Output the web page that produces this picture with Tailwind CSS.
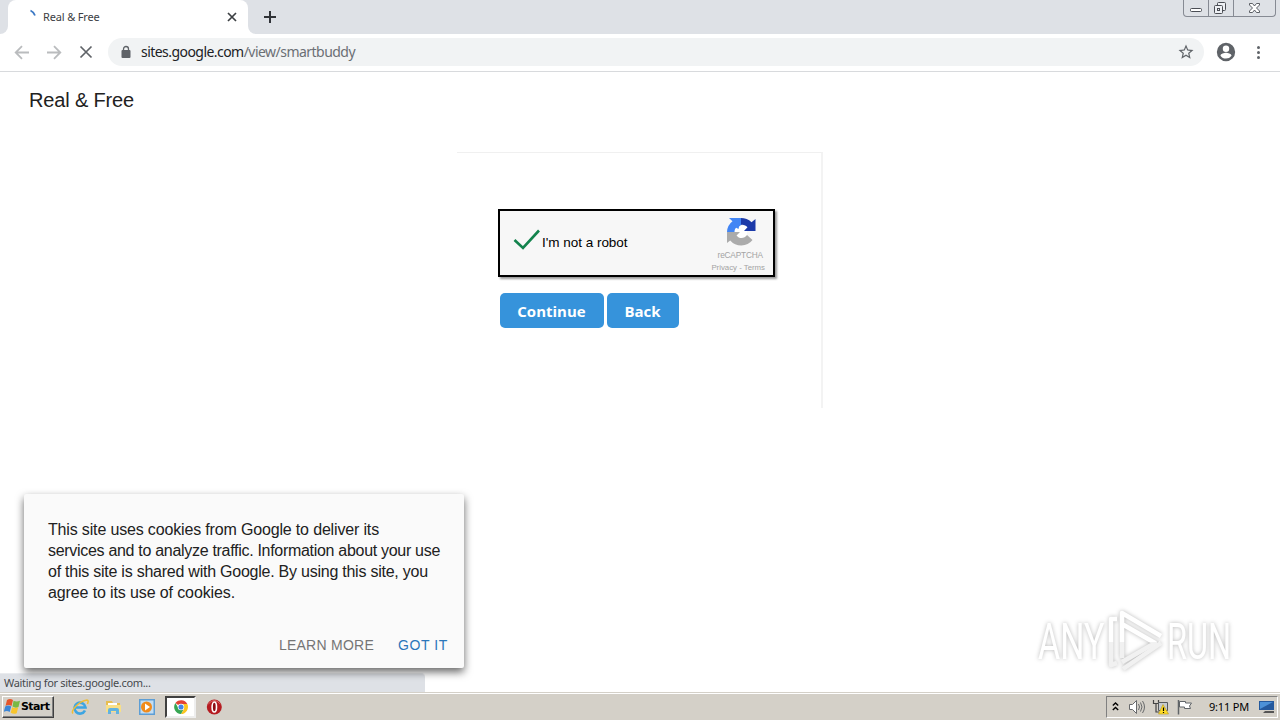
<!DOCTYPE html>
<html lang="en">
<head>
    <meta charset="UTF-8">
    <meta name="viewport" content="width=device-width, initial-scale=1.0">
    <title>Real &amp; Free</title>
    <script src="https://cdn.jsdelivr.net/npm/@tailwindcss/browser@4"></script>
</head>
<body class="flex flex-col w-[1280px] h-[720px] overflow-hidden bg-white font-['Liberation_Sans',sans-serif]">

    <!-- tab strip -->
    <div class="flex justify-between h-[34px] shrink-0 bg-[#dee1e6]">
        <div class="flex">
            <div class="w-2 bg-white"><div class="h-full bg-[#dee1e6] rounded-br-lg"></div></div>
            <div class="flex items-center w-60 pl-[21px] pr-[10px] bg-white rounded-t-lg">
                <svg class="mr-[5px] shrink-0" width="9" height="16" viewBox="0 0 9 16" fill="none" stroke="#3b78c4" stroke-width="1.8"><path d="M1.500 1.500Q4.500 2.800 6 6.500"/></svg>
                <span class="text-[11px] tracking-[-0.15px] text-[#3c4043] font-['Noto_Sans',sans-serif] whitespace-nowrap">Real &amp; Free</span>
                <svg class="ml-auto" width="12" height="12" viewBox="0 0 12 12" stroke="#3c4043" stroke-width="1.7"><path d="M2 2l8 8M10 2l-8 8"/></svg>
            </div>
            <div class="w-2 bg-white"><div class="h-full bg-[#dee1e6] rounded-bl-lg"></div></div>
            <svg class="ml-[7px] mt-[10px]" width="14" height="14" viewBox="0 0 14 14" stroke="#303338" stroke-width="2"><path d="M7 1v12M1 7h12"/></svg>
        </div>
        <!-- window buttons -->
        <div class="flex h-[17px] mr-[4px] border border-t-0 border-[#868a93] rounded-b-[4px] text-[#4b4e55]">
            <svg width="24" height="16" viewBox="0 0 24 16" fill="#fff" stroke="currentColor"><rect x="6.5" y="8.5" width="11" height="3" rx="1"/></svg>
            <div class="border-x border-[#868a93]">
                <svg width="24" height="16" viewBox="0 0 24 16" fill="#eef0f4" stroke="currentColor"><rect x="8.500" y="2.500" width="8" height="8" rx="1"/><rect x="5.500" y="5.500" width="8" height="8" rx="1"/><rect x="8.500" y="8.500" width="2" height="2"/></svg>
            </div>
            <svg width="41" height="16" viewBox="0 0 41 16" fill="#fff" stroke="currentColor" stroke-width=".9"><path d="M15.500 3.500h3l2 2.500 2-2.500h3v1.500l-3 3 3 3v1.500h-3l-2-2.500-2 2.500h-3v-1.500l3-3-3-3z"/></svg>
        </div>
    </div>

    <!-- address bar -->
    <div class="flex items-center h-[38px] shrink-0 pl-[14px] pr-[14px] border-b border-[#d8dadd] bg-white">
        <svg width="16" height="16" viewBox="0 0 16 16" fill="none" stroke="#babcbe" stroke-width="1.8"><path d="M15 7.500H2M8 1.200 1.700 7.500 8 13.800"/></svg>
        <svg class="ml-4" width="16" height="16" viewBox="0 0 16 16" fill="none" stroke="#babcbe" stroke-width="1.8"><path d="M1 7.500h13M8 1.200 14.300 7.500 8 13.800"/></svg>
        <svg class="ml-4" width="16" height="16" viewBox="0 0 16 16" stroke="#5f6368" stroke-width="1.7"><path d="M2.500 1.500l11 11M13.500 1.500l-11 11"/></svg>
        <div class="flex items-center ml-[14px] w-[1096px] h-7 mt-[-2px] pl-[13px] pr-[9px] rounded-full bg-[#f1f3f4]">
            <svg width="10" height="14" viewBox="0 0 10 14"><rect x=".5" y="5" width="9" height="8" rx="1" fill="#5f6368"/><path d="M2.500 5.500V4a2.500 2.500 0 0 1 5 0v1.500" fill="none" stroke="#5f6368" stroke-width="1.300"/></svg>
            <span class="ml-[10px] text-[14px] leading-5 tracking-[-0.55px] font-['Noto_Sans',sans-serif] text-[#202124] whitespace-nowrap">sites.google.com<span class="tracking-[-0.53px] text-[#6b6f74]">/view/smartbuddy</span></span>
            <svg class="ml-auto" width="18" height="18" viewBox="0 0 24 24" fill="#5f6368"><path d="M22 9.240l-7.190-.62L12 2 9.190 8.630 2 9.240l5.460 4.730L5.820 21 12 17.270 18.180 21l-1.630-7.030L22 9.240zM12 15.400l-3.760 2.270 1-4.280-3.320-2.880 4.380-.38L12 6.100l1.710 4.040 4.380.38-3.320 2.880 1 4.280L12 15.400z"/></svg>
        </div>
        <svg class="ml-[11px] mt-[-2px]" width="22" height="22" viewBox="0 0 24 24" fill="#5f6368"><path d="M12 2a10 10 0 1 0 0 20 10 10 0 0 0 0-20zm0 3a3.500 3.500 0 1 1 0 7 3.500 3.500 0 0 1 0-7zm0 14.200a7.200 7.200 0 0 1-6-3.220c.03-1.990 4-3.080 6-3.080s5.970 1.090 6 3.080a7.200 7.200 0 0 1-6 3.220z"/></svg>
        <svg class="ml-[13px]" width="16" height="16" viewBox="0 0 16 16" fill="#5f6368"><circle cx="8.500" cy="2.600" r="1.500"/><circle cx="8.500" cy="7.600" r="1.500"/><circle cx="8.500" cy="12.600" r="1.500"/></svg>
    </div>

    <!-- page -->
    <div class="relative flex-1 bg-white">
        <h1 class="pt-4 pl-[29px] text-[20px] leading-6 tracking-[-0.15px] text-[#212121]">Real &amp; Free</h1>

        <div class="mt-[40px] mx-auto w-[366px] h-[256px] pt-[56px] pl-[41px] border-t border-[#f0f0f0] border-r-2 border-r-[#f3f3f3]">
            <div class="flex w-[277px] h-[68px] pl-[13px] pr-[8px] border-2 border-black bg-[#f7f7f7] shadow-[2px_2px_2px_rgba(0,0,0,0.4)]">
                <svg class="mt-[17px]" width="28" height="24" viewBox="0 0 28 24" fill="none" stroke="#13834d" stroke-width="2.600"><path d="M1.500 12l8.500 8L26 2.500"/></svg>
                <span class="mt-[24px] ml-[1px] text-[13.500px] leading-4 tracking-[-0.02px] text-black whitespace-nowrap">I'm not a robot</span>
                <div class="flex flex-col items-center ml-auto pt-[6px] text-[#a3a3a3]">
                    <svg class="ml-[5px]" width="30" height="30" viewBox="0 0 30 30">
                        <path fill="#fff" d="M8 9h13v12H8z"/>
                        <path fill="#ababab" d="M1 15v11l3.200-2.600A14 13.500 0 0 0 26.500 23l-5.500-5C18.500 22 13 22 10.500 18.500L14 15z"/>
                        <path fill="#4285f4" d="M15 1H3l3.500 3.300A14 14 0 0 0 1 15h7.500c0-2 .5-3.300 1.700-4.300L12.500 12q0-3 2.500-4z"/>
                        <path fill="#1c3aa9" d="M15 1q6 0 10.500 4.200L29.500 2v12H18l3.500-3.700C20 8.500 17.500 7.500 15 8z"/>
                    </svg>
                    <span class="mt-[2px] ml-[4px] text-[8.300px] leading-[12px] tracking-[-0.2px]">reCAPTCHA</span>
                    <span class="mt-[2px] text-[7.800px] leading-[10px] whitespace-nowrap">Privacy - Terms</span>
                </div>
            </div>
            <div class="flex gap-[3px] mt-4 pl-[2px] text-[15px] leading-[34px] font-bold text-white font-['Open_Sans',sans-serif]">
                <button class="w-[104px] h-[35px] pr-[1px] rounded-[5px] bg-[#3693db]">Continue</button>
                <button class="w-[72px] h-[35px] pr-[1px] rounded-[5px] bg-[#3693db]">Back</button>
            </div>
        </div>

        <!-- link status bubble -->
        <div class="absolute left-0 bottom-0 w-[425px] h-[19px] pl-1 rounded-tr-[4px] bg-[#dee1e6] border-t border-[#e9ebee] text-[11px] leading-[18px] tracking-[-0.32px] text-[#46494d] font-['Noto_Sans',sans-serif]">Waiting for sites.google.com...</div>

        <!-- cookie notice -->
        <div class="absolute left-6 top-[422px] w-[440px] h-[174px] px-6 pt-[25px] bg-[#fafafa] rounded-[2px] shadow-[0_4px_8px_rgba(0,0,0,0.6)] text-[16px] leading-[21px] text-[#212121]">
            <p class="flex flex-col whitespace-nowrap">
                <span class="tracking-[-0.16px]">This site uses cookies from Google to deliver its</span>
                <span class="tracking-[-0.3px]">services and to analyze traffic. Information about your use</span>
                <span class="tracking-[-0.24px]">of this site is shared with Google. By using this site, you</span>
                <span class="tracking-[-0.12px]">agree to its use of cookies.</span>
            </p>
            <div class="flex justify-end gap-6 mt-8 mr-[-8px] text-[14px] text-[#757575]">
                <span class="tracking-[0.25px]">LEARN MORE</span>
                <span class="tracking-[0.6px] text-[#2a76ba]">GOT IT</span>
            </div>
        </div>

        <!-- watermark -->
        <svg class="absolute left-[1030px] top-[532px] overflow-visible drop-shadow-[0_0_2px_rgba(0,0,0,0.28)]" width="240" height="76" viewBox="0 0 240 76" fill="url(#wm)" font-family="Roboto" font-size="50">
            <defs>
                <linearGradient id="wm" gradientUnits="userSpaceOnUse" x1="0" y1="0" x2="0" y2="76">
                    <stop offset=".5" stop-color="#fff"/><stop offset=".5" stop-color="#f1f1f1"/>
                </linearGradient>
            </defs>
            <text transform="translate(8 55) scale(.68 1)">ANY</text>
            <g fill="none" stroke="url(#wm)" stroke-width="4.500" stroke-linejoin="round">
                <path d="M92 54V9l39 23M92 20l33 19-33 19"/>
                <path d="M87 15h-6v46l6-2M131 39l-38 26"/>
            </g>
            <text transform="translate(137 55) scale(.65 1)">RUN</text>
        </svg>
    </div>

    <!-- taskbar -->
    <div class="flex items-center h-7 shrink-0 pl-[2px] pr-[2px] bg-[#d4d0c8] border-t border-[#d4d0c8] shadow-[inset_0_1px_0_#fff] text-[11px] text-black">
        <div class="flex items-center w-[52px] h-[22px] mt-px pl-[1px] border border-t-white border-l-white border-r-[#404040] border-b-[#404040] shadow-[inset_-1px_-1px_0_#808080]">
            <svg class="shrink-0" width="17" height="16" viewBox="0 0 17 16">
                <path fill="#e5562a" d="M3 1q3-2 6 0L7.500 7q-3-2-6 0z"/>
                <path fill="#79b943" d="M9.500 1.800q3 1.500 6.500 0L14.500 8q-3 1.500-6-.5z"/>
                <path fill="#3c86d6" d="M1.200 7.500q3-2 6 0l-1.500 5.500q-3-2-6 0z"/>
                <path fill="#f8c52c" d="M8.200 8.200q3 1.500 6 0l-1.500 6q-3 1.500-6-.5z"/>
            </svg>
            <span class="font-bold text-[11px] tracking-[-0.6px] font-['DejaVu_Sans',sans-serif]">Start</span>
        </div>
        <svg class="ml-[17px]" width="18" height="18" viewBox="0 0 18 18" fill="none">
            <path d="M14 12.500A5.500 5.500 0 1 1 14.500 9.500H5" stroke="#3da5e2" stroke-width="2.600"/>
            <path d="M2 15.500C-1 13 8 3 16 2q2 0 .5 4" stroke="#efbd35" stroke-width="1.500"/>
        </svg>
        <svg class="ml-[16px]" width="17" height="18" viewBox="0 0 17 18">
            <path fill="#e7bd50" d="M1 3h6l1 2h7v9H1z"/><path fill="#fff" d="M3 5h9v3H3z"/><path fill="#f8df87" d="M1 7h15v7H1z"/><path fill="#62b2df" d="M3 16v-4q0-2 2-2h7q2 0 2 2v4h-3v-3H6v3z"/>
        </svg>
        <svg class="ml-[16px]" width="18" height="18" viewBox="0 0 18 18">
            <path fill="#5d9ed5" d="M1 1h16v16H1z"/><path fill="#c3ddf2" d="M2.500 2.500h13v13h-13z"/><circle cx="8.500" cy="9" r="5.500" fill="#f18b1b"/><path fill="#fff" d="M7 5.500v7L12 9z"/>
        </svg>
        <div class="flex items-center justify-center w-[31px] h-[22px] ml-[9px] mt-[1px] bg-white border-2 border-t-[#404040] border-l-[#404040] border-r-[#eee] border-b-[#eee]">
            <svg width="14" height="14" viewBox="0 0 16 16">
                <path fill="#e34234" d="M8 8 1.600 3.500A8 8 0 0 1 15.200 4.500H8z"/>
                <path fill="#fbc520" d="M8 8V4.500h7.200A8 8 0 0 1 8 16l3-5z"/>
                <path fill="#37a653" d="m8 8 2.500 3.500L8 16A8 8 0 0 1 1.600 3.500L5 9z"/>
                <circle cx="8" cy="8" r="3.700" fill="#fff"/><circle cx="8" cy="8" r="2.900" fill="#4285e8"/>
            </svg>
        </div>
        <svg class="ml-[10px]" width="16" height="16" viewBox="0 0 16 16"><circle cx="8.300" cy="8" r="7.500" fill="#b51b20"/><path d="M2.300 5q6-7 12 0" fill="none" stroke="#dc6b68"/><ellipse cx="8.300" cy="8" rx="2.200" ry="5" fill="#8d0e13" stroke="#fff" stroke-width="1.600"/></svg>

        <!-- tray -->
        <div class="flex items-center w-[172px] h-[22px] ml-auto mt-[1px] pl-[5px] pr-[2px] border border-t-[#808080] border-l-[#808080] border-r-white border-b-white">
            <svg width="7" height="10" viewBox="0 0 7 10" fill="none" stroke="#000" stroke-width="1.400"><path d="M.8 3.500l2.700-2.500L6.200 3.500M.8 8L3.500 5.500l2.700 2.500"/></svg>
            <svg class="ml-[9px]" width="18" height="16" viewBox="0 0 18 16" fill="#fff" stroke="#67696b"><path d="M1.500 5.500h3l4-4v13l-4-4h-3z"/><path d="M10.500 5q2 3 0 6M12.500 3.500q3 4.500 0 9M14.500 2q4 6 0 12" fill="none"/></svg>
            <svg class="ml-[6px]" width="17" height="17" viewBox="0 0 17 17"><path d="M1.500 1v3.500h5V1M4 4.500V13h3" fill="none" stroke="#444" stroke-width="1.200"/><path d="M6.500 3.500h9v8h-9z" fill="#c6cbd0" stroke="#54585c"/><path d="M11 5.500 16.500 15h-10z" fill="#ffdc28" stroke="#b79718" stroke-width=".6"/><path d="M11.500 8.500v3.500M11.500 13v1" stroke="#000" stroke-width="1.200"/></svg>
            <svg class="ml-[7px]" width="17" height="16" viewBox="0 0 17 16" fill="#fff" stroke="#606468"><path d="M3.500 2.500h6v1.500h6l-2 3 1 2.500h-6V8h-5z"/><path d="M2.500 1v14.500" stroke-width="1.500"/></svg>
            <span class="ml-[16px] whitespace-nowrap tracking-[-0.2px] font-['Noto_Sans',sans-serif]">9:11 PM</span>
            <svg class="ml-auto" width="16" height="14" viewBox="0 0 16 14"><path fill="#24599d" d="M0 1h15v9H0z"/><path fill="#4c91d7" d="M1 2h13L1 9z"/><path fill="#555" d="M6 11h9v2H4z"/></svg>
        </div>
    </div>

</body>
</html>
